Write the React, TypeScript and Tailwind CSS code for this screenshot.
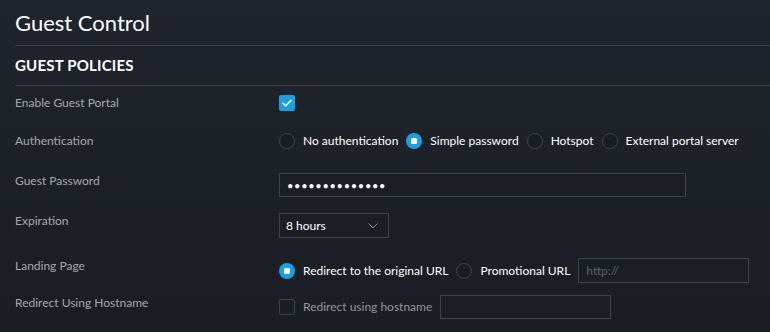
import React from "react";

const font = { fontFamily: "Lato, 'Noto Sans', sans-serif" };

function Radio({ checked }: { checked?: boolean }) {
  if (checked) {
    return (
      <div className="flex h-4 w-4 shrink-0 items-center justify-center rounded-full bg-[#1a9fe0]">
        <div className="h-[6px] w-[6px] rounded-[1.5px] bg-white" />
      </div>
    );
  }
  return <div className="h-4 w-4 shrink-0 rounded-full border border-[#3a424b] bg-[#1a1e24]" />;
}

function Checkbox({ checked }: { checked?: boolean }) {
  if (checked) {
    return (
      <div className="flex h-4 w-4 shrink-0 items-center justify-center rounded-[2px] bg-[#1a9fe0]">
        <svg width="10" height="8" viewBox="0 0 10 8" fill="none">
          <path d="M1 4.2L3.8 6.8L9 1.2" stroke="white" strokeWidth="1.5" strokeLinecap="round" strokeLinejoin="round" />
        </svg>
      </div>
    );
  }
  return <div className="h-4 w-4 shrink-0 rounded-[2px] border border-[#3a424b] bg-[#1a1e24]" />;
}

function Row({ label, children, className }: { label: string; children: React.ReactNode; className?: string }) {
  return (
    <div className={"flex items-start " + (className ?? "")}>
      <div className="w-[264px] shrink-0 text-[12px] leading-4 text-[#a4a8ad]">{label}</div>
      <div className="flex items-center">{children}</div>
    </div>
  );
}

export default function App() {
  return (
    <div
      className="h-[332px] w-[770px] overflow-hidden bg-gradient-to-b from-[#1f252d] to-[#1a1d22] pl-[15px]"
      style={font}
    >
      <div className="flex h-[46px] items-center border-b border-[#3a4149]">
        <h1 className="text-[22px] leading-none text-white">Guest Control</h1>
      </div>
      <div className="flex h-[40px] items-center border-b border-[#3a4149]">
        <h2 className="text-[15px] font-bold leading-none tracking-[0.2px] text-white">GUEST POLICIES</h2>
      </div>

      <Row label="Enable Guest Portal" className="mt-[9px]">
        <Checkbox checked />
      </Row>

      <Row label="Authentication" className="mt-[22px]">
        <div className="flex items-center gap-2 text-[12px] leading-4 text-white">
          <Radio />
          <span>No authentication</span>
          <Radio checked />
          <span>Simple password</span>
          <Radio />
          <span>Hotspot</span>
          <Radio />
          <span>External portal server</span>
        </div>
      </Row>

      <Row label="Guest Password" className="mt-[24px]">
        <div className="flex h-[24px] w-[407px] items-center border border-[#3c434b] bg-[#1b1f25] px-[7px]">
          <span className="text-[11px] leading-none tracking-[0.7px] text-white">••••••••••••••</span>
        </div>
      </Row>

      <Row label="Expiration" className="mt-[16px]">
        <div className="flex h-[25px] w-[110px] items-center justify-between border border-[#3c434b] bg-[#1b1f25] pl-[6px] pr-[10px] text-[12px] text-white">
          <span>8 hours</span>
          <svg width="10" height="6" viewBox="0 0 10 6" fill="none">
            <path d="M0.5 0.5L5 5L9.5 0.5" stroke="#8a9096" strokeWidth="1" />
          </svg>
        </div>
      </Row>

      <Row label="Landing Page" className="mt-[20px]">
        <div className="flex h-[25px] items-center gap-2 text-[12px] leading-4 text-white">
          <Radio checked />
          <span>Redirect to the original URL</span>
          <Radio />
          <span>Promotional URL</span>
          <div className="flex h-[25px] w-[171px] items-center border border-[#3c434b] bg-[#1b1f25] px-[7px] text-[#5c6268]">
            http://
          </div>
        </div>
      </Row>

      <Row label="Redirect Using Hostname" className="mt-[12px]">
        <div className="flex h-[24px] items-center gap-2 text-[12px] leading-4 text-[#92979c]">
          <Checkbox />
          <span>Redirect using hostname</span>
          <div className="h-[24px] w-[171px] border border-[#3c434b] bg-[#1b1f25]" />
        </div>
      </Row>
    </div>
  );
}
